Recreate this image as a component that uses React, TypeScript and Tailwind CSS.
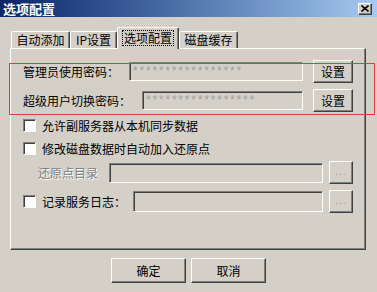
import React from "react";

// classic 3D edges
const raised =
  "border border-t-white border-l-white border-r-[#404040] border-b-[#404040] shadow-[inset_-1px_-1px_0_#808080] bg-[#d4d0c8]";
const sunken =
  "border border-t-[#808080] border-l-[#808080] border-r-white border-b-white shadow-[inset_1px_1px_0_#404040] bg-[#d4d0c8]";

function Button({ label, w, h }: { label: string; w: string; h: string }) {
  return (
    <div className={`${raised} ${w} ${h} flex items-center justify-center text-[12px] leading-none text-black`}>
      {label}
    </div>
  );
}

function DotsButton() {
  return (
    <div className={`${raised} w-[24px] h-[23px] flex items-end justify-center pb-[6px]`}>
      <span className="text-[10px] leading-none text-[#9a9a9a] tracking-[1px] font-['Liberation_Sans',sans-serif]">...</span>
    </div>
  );
}

function Checkbox() {
  return <div className="w-[13px] h-[13px] shrink-0 border border-t-[#808080] border-l-[#808080] border-r-white border-b-white shadow-[inset_1px_1px_0_#404040] bg-white" />;
}

function PasswordField({ w }: { w: string }) {
  return (
    <div className={`${sunken} ${w} h-[19px] pl-[3px] pt-[1px] overflow-hidden`}>
      <span className="block text-[12px] leading-[14px] text-[#a0a0a0] tracking-[1.8px] font-['Liberation_Sans',sans-serif]">
        *****************
      </span>
    </div>
  );
}

const tabs = [
  { label: "自动添加", w: "w-[59px]" },
  { label: "IP设置", w: "w-[47px]" },
  { label: "选项配置", w: "w-[62px]", active: true },
  { label: "磁盘缓存", w: "w-[59px]" },
];

export default function App() {
  return (
    <div className="relative w-[377px] h-[292px] overflow-hidden bg-[#d4d0c8] text-black font-['Noto_Sans_CJK_SC','SimSun',sans-serif]">
      {/* title bar */}
      <div className="h-[17px] flex items-center justify-between bg-linear-to-r from-[#0a246a] to-[#a6caf0]">
        <span className="pl-[3px] text-[13px] font-bold leading-none text-white">选项配置</span>
        <div className={`${raised} w-[14px] h-[12px] mr-[5px] flex items-center justify-center`}>
          <svg width="8" height="7" viewBox="0 0 8 7">
            <path d="M0.5 0.5 L7.5 6.5 M7.5 0.5 L0.5 6.5" stroke="#000" strokeWidth="1.6" />
          </svg>
        </div>
      </div>

      <div className="pl-[10px] pt-[10px]">
        {/* tab strip */}
        <div className="flex items-end h-[21px] pl-[1px]">
          {tabs.map((t) =>
            t.active ? (
              <div
                key={t.label}
                className={`${t.w} relative z-10 h-[22px] mb-[-1px] bg-[#d4d0c8] border-t border-l border-t-white border-l-white border-r border-r-[#404040] shadow-[inset_-1px_0_0_#808080] rounded-t-[2px] flex justify-center pt-[2px]`}
              >
                <span className="h-[16px] px-[1px] border border-dotted border-black text-[12px] leading-[14px]">{t.label}</span>
              </div>
            ) : (
              <div
                key={t.label}
                className={`${t.w} h-[17px] bg-[#d4d0c8] border-t border-l border-t-white border-l-white border-r border-r-[#404040] shadow-[inset_-1px_0_0_#808080] rounded-t-[2px] flex items-center justify-center text-[12px] leading-none`}
              >
                {t.label}
              </div>
            )
          )}
        </div>

        {/* panel */}
        <div className="w-[356px] h-[202px] border border-t-white border-l-white border-r-[#404040] border-b-[#404040] shadow-[inset_-1px_-1px_0_#808080] pl-[12px] pt-[11px] flex flex-col">
          <div className="flex items-center h-[23px]">
            <span className="w-[106px] text-[12px] leading-none">管理员使用密码：</span>
            <PasswordField w="w-[174px]" />
            <div className="ml-[10px]">
              <Button label="设置" w="w-[40px]" h="h-[23px]" />
            </div>
          </div>
          <div className="flex items-center h-[23px] mt-[6px]">
            <span className="w-[119px] text-[12px] leading-none">超级用户切换密码：</span>
            <PasswordField w="w-[161px]" />
            <div className="ml-[10px]">
              <Button label="设置" w="w-[40px]" h="h-[23px]" />
            </div>
          </div>

          <div className="flex items-center h-[15px] mt-[6px]">
            <Checkbox />
            <span className="ml-[6px] text-[12px] leading-none">允许副服务器从本机同步数据</span>
          </div>
          <div className="flex items-center h-[15px] mt-[8px]">
            <Checkbox />
            <span className="ml-[6px] text-[12px] leading-none">修改磁盘数据时自动加入还原点</span>
          </div>

          <div className="flex items-center h-[23px] mt-[5px] pl-[15px]">
            <span className="w-[71px] text-[12px] leading-none text-[#808080] [text-shadow:1px_1px_0_#ffffff]">还原点目录</span>
            <div className={`${sunken} w-[214px] h-[20px]`} />
            <div className="ml-[6px]">
              <DotsButton />
            </div>
          </div>

          <div className="flex items-center h-[23px] mt-[6px]">
            <Checkbox />
            <span className="ml-[6px] w-[91px] text-[12px] leading-none">记录服务日志：</span>
            <div className={`${sunken} w-[190px] h-[21px]`} />
            <div className="ml-[6px]">
              <DotsButton />
            </div>
          </div>
        </div>
      </div>

      {/* bottom buttons */}
      <div className="flex justify-center gap-[5px] mt-[8px]">
        <Button label="确定" w="w-[75px]" h="h-[25px]" />
        <Button label="取消" w="w-[75px]" h="h-[25px]" />
      </div>

      {/* red annotation box */}
      <div className="pointer-events-none absolute left-[9px] top-[63px] w-[366px] h-[52px] border border-[#e23b3b]" />
    </div>
  );
}
